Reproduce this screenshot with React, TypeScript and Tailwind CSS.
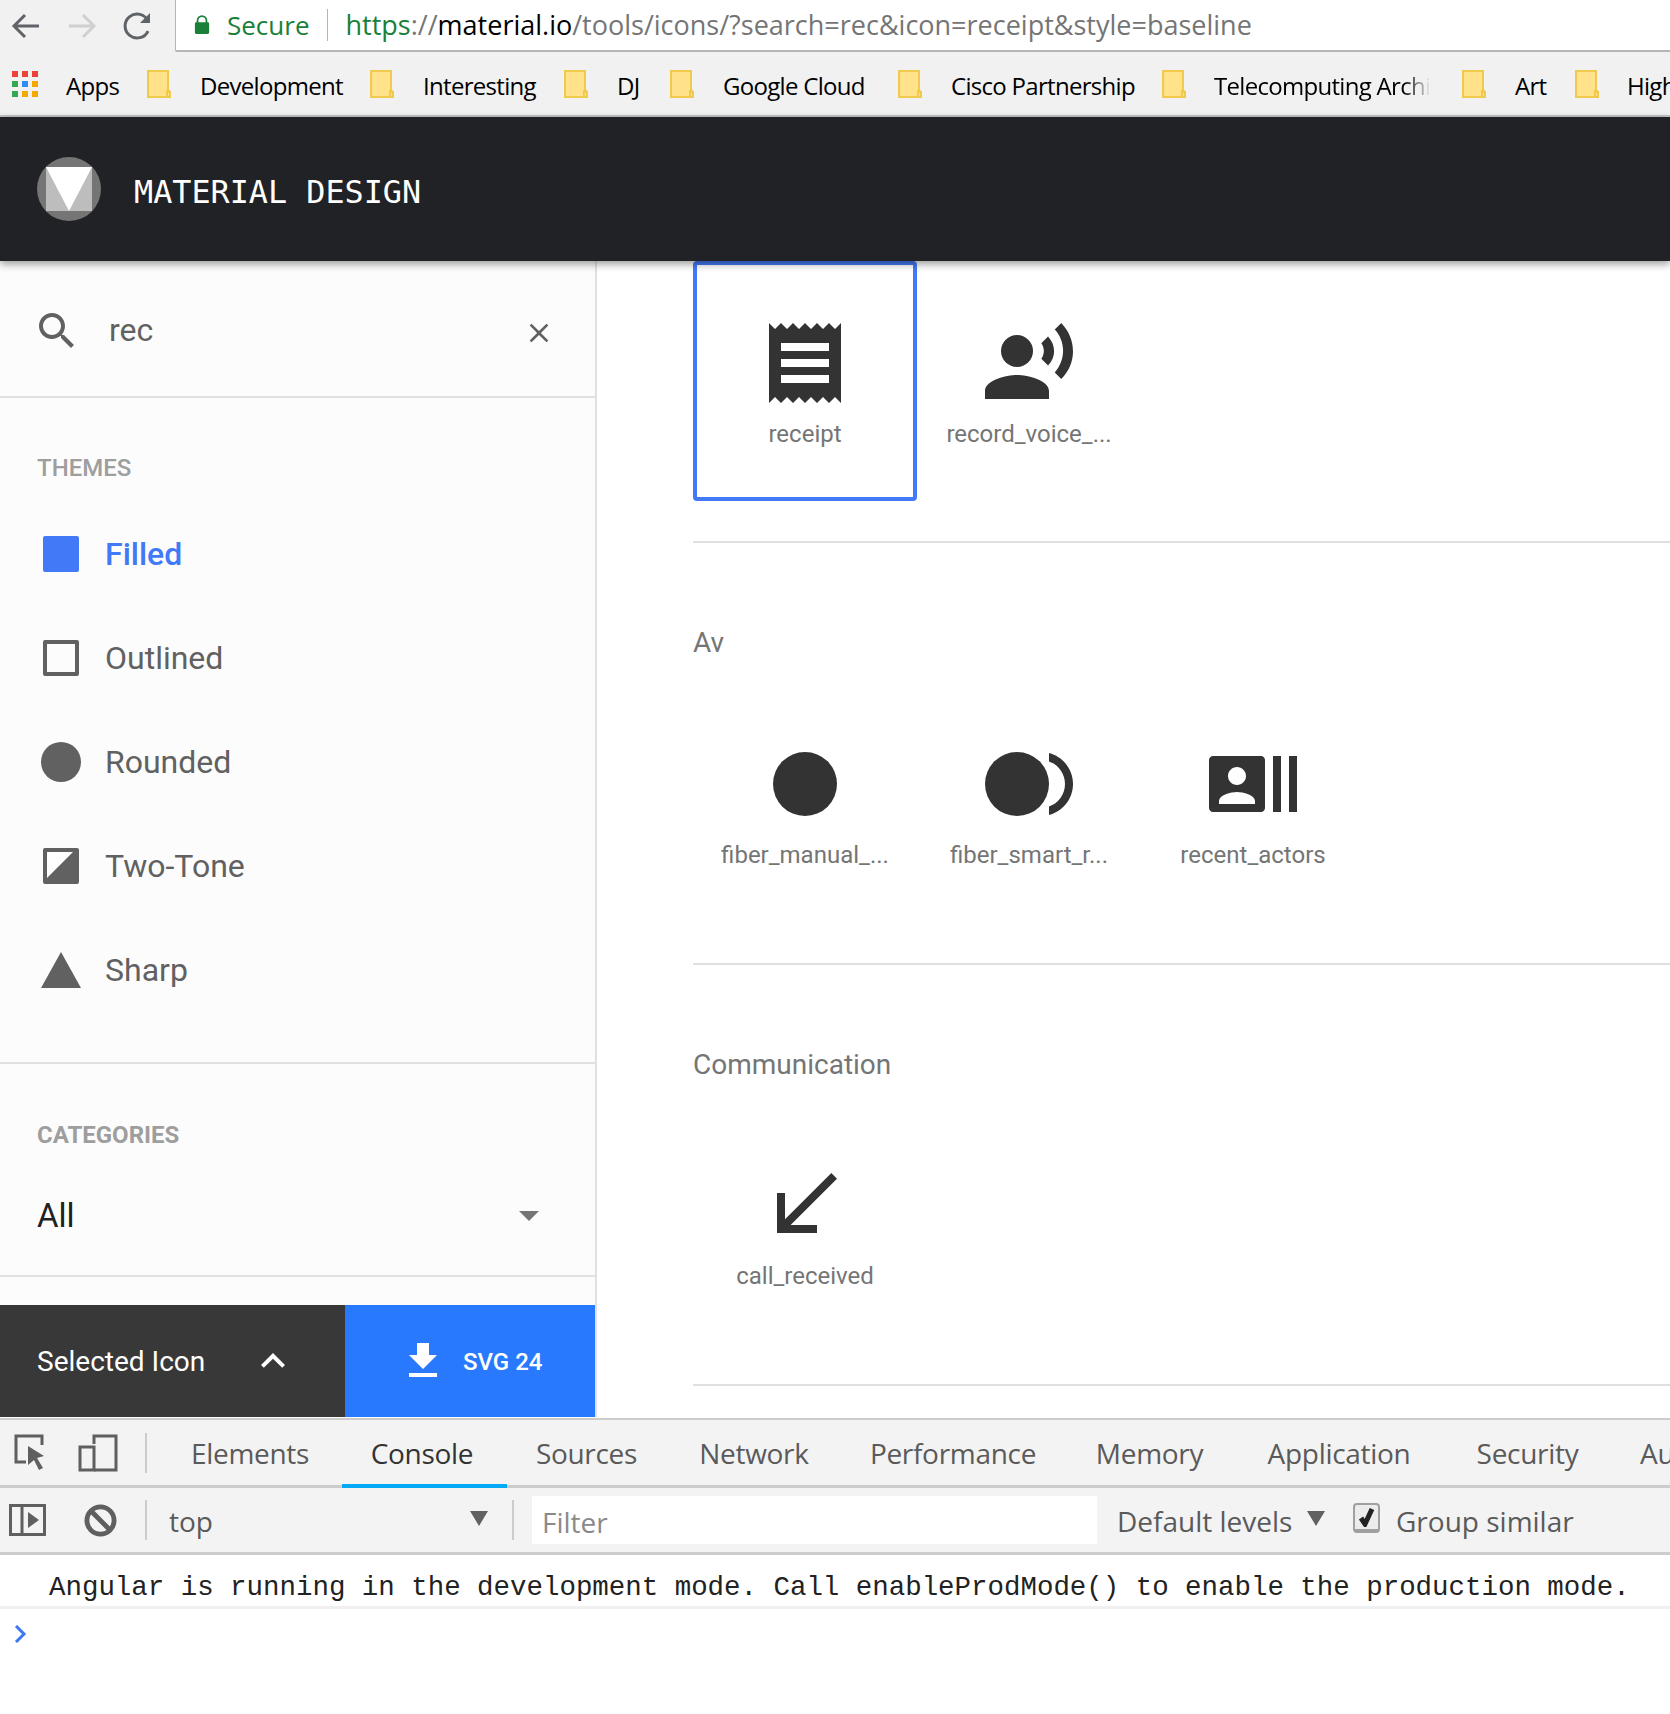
import React from 'react';

const chromeFont = "font-['Open_Sans',sans-serif]";

const bookmarks = [
  { name: 'Development', width: 'w-[141px]' },
  { name: 'Interesting', width: 'w-[112px]' },
  { name: 'DJ', width: 'w-[24px]' },
  { name: 'Google Cloud', width: 'w-[146px]' },
  { name: 'Cisco Partnership', width: 'w-[182px]' },
];

const tabs = [
  { name: 'Elements', width: 'w-[118px]' },
  { name: 'Console', width: 'w-[106px]', active: true },
  { name: 'Sources', width: 'w-[103px]' },
  { name: 'Network', width: 'w-[112px]' },
  { name: 'Performance', width: 'w-[166px]' },
  { name: 'Memory', width: 'w-[107px]' },
  { name: 'Application', width: 'w-[152px]' },
  { name: 'Security', width: 'w-[105px]' },
];

const Folder: React.FC = () => (
  <svg viewBox="0 0 24 28" className="w-[24px] h-[28px] shrink-0">
    <path d="M1 1h20v21h2v5H1z" fill="#ffe28a" stroke="#f0c94d" strokeWidth="2" />
    <path d="M20 27v-6h3" fill="none" stroke="#f0c94d" strokeWidth="2" />
  </svg>
);

const AppsIcon: React.FC = () => {
  const colors = ['bg-[#ef4136]', 'bg-[#ef4136]', 'bg-[#ef4136]', 'bg-[#34a853]', 'bg-[#2f8df5]', 'bg-[#f5a800]', 'bg-[#34a853]', 'bg-[#f5a800]', 'bg-[#f5a800]'];
  return (
    <div className="grid grid-cols-3 gap-[4px] w-[26px] shrink-0">
      {colors.map((c, i) => (
        <span key={i} className={`h-[6px] ${c}`} />
      ))}
    </div>
  );
};

const Bookmark: React.FC<{ name: string; width: string }> = ({ name, width }) => (
  <div className="flex items-center shrink-0">
    <Folder />
    <span className={`ml-[29px] mr-[29px] pt-[4px] whitespace-nowrap ${width}`}>{name}</span>
  </div>
);

const TopBars: React.FC = () => (
  <div className={`${chromeFont} shrink-0`}>
    <div className="flex h-[52px] bg-[#f1f1f1]">
      <div className="flex w-[175px] shrink-0 items-center pl-[11px] gap-[26px]">
        <svg viewBox="0 0 30 30" className="w-[30px] h-[30px] shrink-0" fill="none" stroke="#5f6368" strokeWidth="3">
          <path d="M28 15H4M14 4L3 15l11 11" />
        </svg>
        <svg viewBox="0 0 30 30" className="w-[30px] h-[30px] shrink-0" fill="none" stroke="#d0d0d0" strokeWidth="3">
          <path d="M2 15h24M16 4l11 11-11 11" />
        </svg>
        <svg viewBox="0 0 30 30" className="w-[30px] h-[30px] shrink-0" fill="none" stroke="#5f6368" strokeWidth="3">
          <path d="M25 20a12 12 0 1 1 0-10" />
          <path d="M27 2v10H17z" fill="#5f6368" stroke="none" />
        </svg>
      </div>
      <div className="flex flex-1 items-center bg-white border-l border-b-2 border-[#b5b5b5] rounded-bl-[2px] pl-[18px] text-[27px] whitespace-nowrap">
        <svg viewBox="0 0 18 22" className="w-[16px] h-[22px] shrink-0">
          <path d="M3 9V6a6 6 0 0 1 12 0v3h-2V6a4 4 0 0 0-8 0v3z" fill="#188038" />
          <rect x="1" y="8" width="16" height="13" rx="1.5" fill="#188038" />
        </svg>
        <span className="ml-[17px] text-[26px] text-[#188038]">Secure</span>
        <span className="ml-[18px] h-[32px] w-px bg-[#b5b5b5]" />
        <span className="ml-[17px]">
          <span className="text-[#188038]">https</span>
          <span className="text-[#757575]">://</span>
          <span className="text-black">material.io</span>
          <span className="text-[#757575]">/tools/icons/?search=rec&amp;icon=receipt&amp;style=baseline</span>
        </span>
      </div>
    </div>
    <div className="flex h-[65px] items-center bg-[#f1f1f1] border-b-2 border-[#c4c4c4] pl-[12px] text-[24px] tracking-[-0.7px] text-black overflow-hidden">
      <AppsIcon />
      <span className="ml-[28px] mr-[27px] pt-[4px] w-[54px] shrink-0">Apps</span>
      {bookmarks.map((b) => (
        <Bookmark key={b.name} name={b.name} width={b.width} />
      ))}
      <div className="flex items-center shrink-0">
        <Folder />
        <span className="ml-[28px] mr-[32px] pt-[4px] w-[216px] overflow-hidden whitespace-nowrap [mask-image:linear-gradient(to_right,black_88%,transparent)]">Telecomputing Archi</span>
      </div>
      <Bookmark name="Art" width="w-[31px]" />
      <div className="flex items-center shrink-0">
        <Folder />
        <span className="ml-[28px] pt-[4px]">High</span>
      </div>
    </div>
  </div>
);

const Logo: React.FC = () => (
  <svg viewBox="0 0 64 64" className="w-[64px] h-[64px] shrink-0">
    <circle cx="32" cy="32" r="32" fill="#757575" />
    <rect x="9" y="10" width="46" height="44" fill="#bdbdbd" />
    <path d="M9 10h46L32 54z" fill="#fff" />
  </svg>
);

const Header: React.FC = () => (
  <div className="relative z-10 flex h-[144px] shrink-0 items-center bg-[#212226] pl-[37px] shadow-[0_3px_8px_rgba(0,0,0,0.4)]">
    <Logo />
    <span className="ml-[33px] mt-[6px] font-['DejaVu_Sans_Mono',monospace] text-[31.8px] text-white whitespace-nowrap">MATERIAL DESIGN</span>
  </div>
);

const themeRowClass = 'flex h-[104px] items-center';

const Sidebar: React.FC = () => (
  <aside className="flex w-[597px] shrink-0 flex-col border-r-2 border-[#e0e0e0] bg-[#fcfcfc] font-['Roboto',sans-serif]">
    <div className="flex h-[137px] shrink-0 items-center border-b-2 border-[#e0e0e0] pl-[33px] pr-[40px]">
      <svg viewBox="0 0 24 24" className="mt-[4px] w-[48px] h-[48px] shrink-0" fill="#616161">
        <path d="M15.5 14h-.79l-.28-.27C15.41 12.59 16 11.11 16 9.5 16 5.91 13.09 3 9.5 3S3 5.91 3 9.5 5.91 16 9.5 16c1.61 0 3.09-.59 4.23-1.57l.27.28v.79l5 4.99L20.49 19l-4.99-5zm-6 0C7.01 14 5 11.99 5 9.5S7.01 5 9.5 5 14 7.01 14 9.5 11.99 14 9.5 14z" />
      </svg>
      <span className="ml-[28px] mt-[2px] text-[32px] text-[#616161]">rec</span>
      <svg viewBox="0 0 24 24" className="ml-auto w-[32px] h-[32px] shrink-0 mt-[8px]" fill="#616161">
        <path d="M19 6.41L17.59 5 12 10.59 6.41 5 5 6.41 10.59 12 5 17.59 6.41 19 12 13.41 17.59 19 19 17.59 13.41 12z" />
      </svg>
    </div>

    <div className="shrink-0 border-b-2 border-[#e0e0e0] pt-[54px] pb-[40px]">
      <div className="pl-[37px] text-[24px] leading-[32px] font-medium text-[#9e9e9e]">THEMES</div>
      <div className="mt-[18px] text-[32px] text-[#616161]">
        <div className={`${themeRowClass} font-medium text-[#4179f7]`}>
          <span className="ml-[43px] w-[36px] h-[36px] rounded-[2px] bg-[#4179f7]" />
          <span className="ml-[26px]">Filled</span>
        </div>
        <div className={themeRowClass}>
          <span className="ml-[43px] w-[36px] h-[36px] rounded-[2px] border-[4px] border-[#616161]" />
          <span className="ml-[26px]">Outlined</span>
        </div>
        <div className={themeRowClass}>
          <span className="ml-[41px] w-[40px] h-[40px] rounded-full bg-[#616161]" />
          <span className="ml-[24px]">Rounded</span>
        </div>
        <div className={themeRowClass}>
          <svg viewBox="0 0 36 36" className="ml-[43px] w-[36px] h-[36px]">
            <path d="M2 0h32a2 2 0 0 1 2 2v32a2 2 0 0 1-2 2H2a2 2 0 0 1-2-2V2a2 2 0 0 1 2-2z" fill="#616161" />
            <path d="M4 4h26L4 30z" fill="#fff" />
          </svg>
          <span className="ml-[26px]">Two-Tone</span>
        </div>
        <div className={themeRowClass}>
          <svg viewBox="0 0 40 36" className="ml-[41px] w-[40px] h-[36px]">
            <path d="M20 0l20 36H0z" fill="#616161" />
          </svg>
          <span className="ml-[24px]">Sharp</span>
        </div>
      </div>
    </div>

    <div className="shrink-0 border-b-2 border-[#e0e0e0] pl-[37px] pr-[56px] pt-[55px] pb-[34px]">
      <div className="text-[24px] leading-[32px] font-bold text-[#9e9e9e]">CATEGORIES</div>
      <div className="mt-[40px] flex h-[50px] items-center justify-between text-[33px] text-[#212121]">
        <span>All</span>
        <span className="w-0 h-0 border-x-[10px] border-t-[10px] border-x-transparent border-t-[#757575]" />
      </div>
    </div>

    <div className="mt-auto flex h-[112px] shrink-0 text-white">
      <div className="flex w-[345px] items-center bg-[#383838] pl-[37px]">
        <span className="pt-[2px] text-[28px]">Selected Icon</span>
        <svg viewBox="0 0 24 24" className="ml-[44px] w-[48px] h-[48px] shrink-0" fill="#fff">
          <path d="M7.41 15.41L12 10.83l4.59 4.58L18 14l-6-6-6 6z" />
        </svg>
      </div>
      <div className="flex flex-1 items-center bg-[#2979ff] pl-[54px]">
        <svg viewBox="0 0 24 24" className="w-[48px] h-[48px] shrink-0" fill="#fff">
          <path d="M19 9h-4V3H9v6H5l7 7 7-7zM5 18v2h14v-2H5z" />
        </svg>
        <span className="ml-[16px] pt-[2px] text-[24px] font-medium">SVG 24</span>
      </div>
    </div>
  </aside>
);

const IconTile: React.FC<{ label: string; selected?: boolean; children: React.ReactNode }> = ({ label, selected, children }) => (
  <div className={`flex h-[240px] w-[224px] shrink-0 flex-col items-center border-4 pt-[50px] ${selected ? 'w-[223px] rounded-[4px] border-[#4179f7]' : 'border-transparent'}`}>
    <svg viewBox="0 0 24 24" className="w-[96px] h-[96px] shrink-0" fill="#333">
      {children}
    </svg>
    <span className="mt-[7px] text-[24px] leading-[32px] text-[#757575] whitespace-nowrap">{label}</span>
  </div>
);

const Divider: React.FC = () => <div className="h-[2px] bg-[#e0e0e0]" />;

const Heading: React.FC<{ className: string; children: React.ReactNode }> = ({ className, children }) => (
  <div className={`pt-[80px] text-[28px] leading-[40px] text-[#757575] ${className}`}>{children}</div>
);

const MainPanel: React.FC = () => (
  <main className="flex-1 overflow-hidden bg-white pl-[96px] font-['Roboto',sans-serif]">
    <div className="flex">
      <IconTile label="receipt" selected>
        <path d="M18 17H6v-2h12v2zm0-4H6v-2h12v2zm0-4H6V7h12v2zM3 22l1.5-1.5L6 22l1.5-1.5L9 22l1.5-1.5L12 22l1.5-1.5L15 22l1.5-1.5L18 22l1.5-1.5L21 22V2l-1.5 1.5L18 2l-1.5 1.5L15 2l-1.5 1.5L12 2l-1.5 1.5L9 2 7.5 3.5 6 2 4.5 3.5 3 2v20z" />
      </IconTile>
      <IconTile label="record_voice_...">
        <circle cx="9" cy="9" r="4" />
        <path d="M9 15c-2.67 0-8 1.34-8 4v2h16v-2c0-2.66-5.33-4-8-4zm7.76-9.64l-1.68 1.69c.84 1.18.84 2.71 0 3.89l1.68 1.69c2.02-2.02 2.02-5.07 0-7.27zM20.07 2l-1.63 1.63c2.77 3.02 2.77 7.56 0 10.74L20.07 16c3.9-3.89 3.91-9.95 0-14z" />
      </IconTile>
    </div>
    <div className="mt-[40px]"><Divider /></div>

    <Heading className="pb-[19px]">Av</Heading>
    <div className="flex">
      <IconTile label="fiber_manual_...">
        <circle cx="12" cy="12" r="8" />
      </IconTile>
      <IconTile label="fiber_smart_r...">
        <circle cx="9" cy="12" r="8" />
        <path d="M17 4.26v2.09c2.33.82 4 3.04 4 5.65s-1.67 4.83-4 5.65v2.09c3.45-.89 6-4.01 6-7.74s-2.55-6.85-6-7.74z" />
      </IconTile>
      <IconTile label="recent_actors">
        <path d="M21 5v14h2V5h-2zm-4 14h2V5h-2v14zM14 5H2c-.55 0-1 .45-1 1v12c0 .55.45 1 1 1h12c.55 0 1-.45 1-1V6c0-.55-.45-1-1-1zM8 7.75c1.24 0 2.25 1.01 2.25 2.25S9.24 12.25 8 12.25 5.75 11.24 5.75 10 6.76 7.75 8 7.75zM12.5 17h-9v-.75c0-1.5 3-2.25 4.5-2.25s4.5.75 4.5 2.25V17z" />
      </IconTile>
    </div>
    <div className="mt-[41px]"><Divider /></div>

    <Heading className="pb-[18px]">Communication</Heading>
    <div className="flex">
      <IconTile label="call_received">
        <path d="M20 5.41L18.59 4 7 15.59V9H5v10h10v-2H8.41z" />
      </IconTile>
    </div>
    <div className="mt-[41px]"><Divider /></div>
  </main>
);

const DevTools: React.FC = () => (
  <div className={`${chromeFont} shrink-0 text-[#5a5a5a]`}>
    <div className="mt-[1px] flex h-[70px] items-center border-y-[2px] border-b-[3px] border-[#cccccc] bg-[#f3f3f3] pl-[14px]">
      <svg viewBox="0 0 32 38" className="w-[32px] h-[38px] shrink-0" fill="none">
        <path d="M12 28H2V2h26v9" stroke="#5f5f5f" strokeWidth="3" />
        <path d="M14 12l16 10-7 2 6 10-4 2-5-10-6 5z" fill="#5f5f5f" />
      </svg>
      <svg viewBox="0 0 40 38" className="ml-[32px] w-[40px] h-[38px] shrink-0" fill="none" stroke="#5f5f5f" strokeWidth="3">
        <path d="M16 10V2h22v34H16" />
        <rect x="2" y="13" width="14" height="23" fill="#f3f3f3" />
      </svg>
      <span className="ml-[27px] h-[40px] w-[2px] shrink-0 bg-[#cccccc]" />
      <div className="ml-[44px] flex h-full items-center gap-[60px] text-[28px] tracking-[-0.3px] whitespace-nowrap">
        {tabs.map((t) => (
          <span key={t.name} className={`relative flex h-full shrink-0 items-center justify-center ${t.width} ${t.active ? 'text-[#333]' : ''}`}>
            {t.name}
            {t.active && <span className="absolute -left-[27px] -right-[32px] -bottom-[3px] h-[4px] bg-[#03a9f4]" />}
          </span>
        ))}
        <span>Au</span>
      </div>
    </div>
    <div className="flex h-[67px] items-center border-b-[3px] border-[#cccccc] bg-[#f3f3f3] pl-[9px] text-[28px] whitespace-nowrap">
      <svg viewBox="0 0 37 32" className="w-[37px] h-[32px] shrink-0" fill="none" stroke="#5f5f5f" strokeWidth="3">
        <rect x="1.5" y="1.5" width="34" height="29" />
        <path d="M13 2v28" />
        <path d="M19 8l11 8-11 8z" fill="#5f5f5f" stroke="none" />
      </svg>
      <svg viewBox="0 0 34 34" className="ml-[38px] w-[33px] h-[33px] shrink-0" fill="none" stroke="#5f5f5f" strokeWidth="5">
        <circle cx="17" cy="17" r="14" />
        <path d="M7 7l20 20" />
      </svg>
      <span className="ml-[28px] h-[40px] w-[2px] bg-[#cccccc]" />
      <span className="ml-[22px] mt-[2px] w-[301px]">top</span>
      <span className="w-0 h-0 border-x-[9px] border-t-[15px] border-x-transparent border-t-[#616161] -mt-[4px]" />
      <span className="ml-[24px] h-[40px] w-[2px] bg-[#cccccc]" />
      <div className="ml-[18px] flex h-[48px] w-[565px] items-center bg-white pl-[10px] pt-[3px] text-[#8a8a8a]">Filter</div>
      <span className="ml-[20px] mt-[2px] w-[176px]">Default levels</span>
      <span className="ml-[14px] w-0 h-0 border-x-[9px] border-t-[15px] border-x-transparent border-t-[#616161] -mt-[4px]" />
      <span className="ml-[28px] flex w-[27px] h-[30px] items-center justify-center rounded-[4px] border-2 border-b-[4px] border-[#a0a0a0] bg-[#ececec] -mt-[4px]">
        <svg viewBox="0 0 18 20" className="w-[18px] h-[20px]" fill="none" stroke="#222" strokeWidth="5">
          <path d="M3 11l4 6L14 2" />
        </svg>
      </span>
      <span className="ml-[16px] mt-[2px]">Group similar</span>
    </div>
  </div>
);

const ConsoleOutput: React.FC = () => (
  <div className="flex-1 bg-white">
    <div className="flex h-[54px] items-end border-b-[3px] border-[#f0f0f0] pl-[49px] font-['Liberation_Mono',monospace] text-[27.45px] leading-[36px] text-[#222] whitespace-nowrap">
      Angular is running in the development mode. Call enableProdMode() to enable the production mode.
    </div>
    <svg viewBox="0 0 14 18" className="ml-[13px] mt-[16px] w-[14px] h-[18px]" fill="none" stroke="#3b78f2" strokeWidth="3">
      <path d="M3 1l8 8-8 8" />
    </svg>
  </div>
);

const App: React.FC = () => {
  return (
    <div className="flex h-[1714px] w-[1670px] flex-col overflow-hidden bg-white">
      <TopBars />
      <Header />
      <div className="flex h-[1156px] shrink-0 overflow-hidden">
        <Sidebar />
        <MainPanel />
      </div>
      <DevTools />
      <ConsoleOutput />
    </div>
  );
};

export default App;
